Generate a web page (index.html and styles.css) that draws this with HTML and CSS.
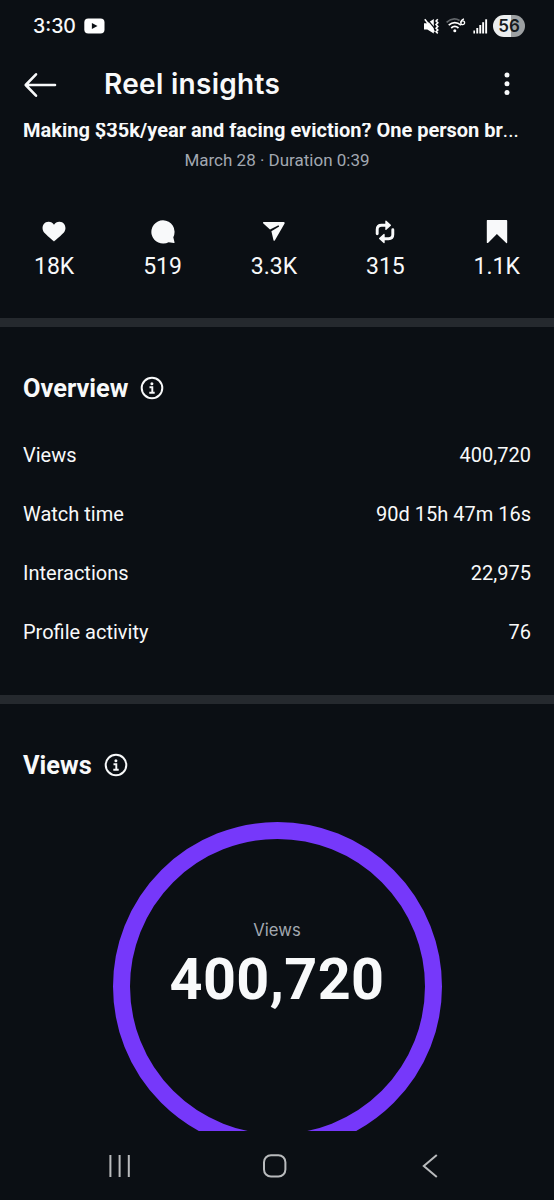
FILE: index.html
```
<!DOCTYPE html>
<html lang="en-us">
  <head>
    <meta charset="utf-8" />
    <meta name="viewport" content="width=device-width, initial-scale=1" />
    <title>Reel insights</title>
    <link rel="stylesheet" href="styles.css">
  </head>
  <body>
    <div class="statusbar">
      <span class="time">3:30</span>
      <svg class="youtube" width="21" height="16" viewBox="0 0 21 16">
        <rect x="0.3" y="0.5" width="20.2" height="15" rx="4" fill="#fff" />
        <path d="M7.9 5v6l5.6-3z" fill="#0b0f14" />
      </svg>
      <div class="status-icons">
        <svg width="17" height="17" viewBox="0 0 17 17">
          <path d="M1 5.3h3.3L10.8 1v14.6L4.3 11.5H1z" fill="#fff" />
          <path d="M3.2 0.2l10 12" stroke="#0b0f14" stroke-width="1.3" />
          <path d="M1.8 1.2l9.6 12.6" stroke="#fff" stroke-width="1.5" />
          <path d="M14.8 1.2l-1.7 1.8 1.7 1.8-1.7 1.8 1.7 1.8-1.7 1.8 1.7 1.8-1.7 1.8 1.7 1.5" fill="none" stroke="#fff" stroke-width="1.6" />
        </svg>
        <svg class="wifi" width="20" height="16" viewBox="0 0 20 16">
          <g fill="none" stroke-width="1.7">
            <path d="M0.6 4.3Q7 -1.3 13.6 2.5" stroke="#62666a" />
            <path d="M2.7 7.2Q8.8 2.2 15 7.2" stroke="#fff" />
            <path d="M5.2 10Q8.8 6.8 12.5 10" stroke="#fff" />
          </g>
          <circle cx="8.8" cy="12.8" r="1.5" fill="#fff" />
          <path d="M18 0.8Q14.9 1.7 14.8 4.7" fill="none" stroke="#fff" stroke-width="1.3" />
          <circle cx="16.7" cy="4.8" r="1.9" fill="none" stroke="#fff" stroke-width="1.3" />
        </svg>
        <svg class="signal" width="15" height="15" viewBox="0 0 15 15" fill="#fff">
          <rect x="0.4" y="11.5" width="1.6" height="3" />
          <rect x="3.3" y="9" width="1.9" height="5.5" />
          <rect x="6.3" y="6" width="1.9" height="8.5" />
          <rect x="9.2" y="3.2" width="1.9" height="11.3" />
          <rect x="12.2" y="0.3" width="1.9" height="14.2" />
        </svg>
        <span class="battery">56</span>
      </div>
    </div>

    <div class="header">
      <svg width="34" height="26" viewBox="0 0 34 26" fill="none" stroke="#f8f9fa" stroke-width="2.6" stroke-linecap="round" stroke-linejoin="round">
        <path d="M13 2.3L2.7 13 13 23.7M3 13h29" />
      </svg>
      <h1>Reel insights</h1>
      <svg class="more" width="6" height="24" viewBox="0 0 6 24" fill="#f8f9fa">
        <circle cx="3" cy="3" r="2.5" />
        <circle cx="3" cy="11.8" r="2.5" />
        <circle cx="3" cy="20.5" r="2.5" />
      </svg>
    </div>

    <div class="content">
      <div class="reel">
        <p class="caption">Making $35k/year and facing eviction? One person br<span>...</span></p>
        <p class="date">March 28 · Duration 0:39</p>
        <div class="stats">
          <div class="stat">
            <svg width="24" height="24" viewBox="0 0 24 24" fill="#f8f9fa">
              <path d="M12 21.5C10.7 20.6 4.4 15.2 2.1 12.6-1 8.8.6 2 6.4 1.8 8.8 1.7 10.8 2.9 12 4.7c1.2-1.8 3.2-3 5.6-2.9 5.8.2 7.4 7 4.3 10.8C19.6 15.2 13.3 20.6 12 21.5z" />
            </svg>
            <span>18K</span>
          </div>
          <div class="stat">
            <svg width="24" height="24" viewBox="0 0 24 24" fill="#f8f9fa">
              <path d="M12 0.2a11.7 11.7 0 1 0 5.6 22l5.3.9q.8 0 .6-.8l-1.2-5.1A11.7 11.7 0 0 0 12 .2z" />
            </svg>
            <span>519</span>
          </div>
          <div class="stat">
            <svg width="24" height="24" viewBox="0 0 24 24" fill="#f8f9fa">
              <path d="M1.6 2h20.1q1.5.1.9 1.4L12.8 20.4q-.8 1-1.3-.2L9.4 11.2 17.2 6.4 16.5 5.3 8 9.6 1.1 3.2Q.5 2.2 1.6 2z" />
            </svg>
            <span>3.3K</span>
          </div>
          <div class="stat">
            <svg width="24" height="24" viewBox="0 0 24 24">
              <g fill="none" stroke="#f8f9fa" stroke-width="2.9" stroke-linecap="round">
                <path d="M4.2 13.7V9.5Q4.2 5.2 8.5 5.2H13" />
                <path d="M19.8 9.8V14.5Q19.8 18.7 15.5 18.7H11" />
              </g>
              <path d="M12.3 1.1v8.3q.2 1 1.1.4l4.4-4q.6-.6 0-1.1L13.4.7q-.9-.6-1.1.4zM11.7 14.6v8q-.2 1-1.1.4l-4.4-4q-.6-.6 0-1.1l4.4-4q.9-.5 1.1.7z" fill="#f8f9fa" />
            </svg>
            <span>315</span>
          </div>
          <div class="stat">
            <svg width="24" height="24" viewBox="0 0 24 24" fill="#f8f9fa">
              <path d="M2.2 0h19.2q.8 0 .8.8v21.7q-.2 1-1 .4L11.9 14 3 22.9q-1 .5-1.2-.4V.8Q1.8 0 2.2 0z" />
            </svg>
            <span>1.1K</span>
          </div>
        </div>
      </div>

      <div class="section overview">
        <h2>
          Overview
          <svg class="info" width="24" height="24" viewBox="0 0 24 24">
            <circle cx="12" cy="12" r="10.3" fill="none" stroke="#f8f9fa" stroke-width="2" />
            <circle cx="11.9" cy="7.7" r="1.5" fill="#f8f9fa" />
            <path d="M9.5 11.2h2.8v5.3M9.3 16.7h5.4" fill="none" stroke="#f8f9fa" stroke-width="1.9" />
          </svg>
        </h2>
        <div class="row"><span>Views</span><span>400,720</span></div>
        <div class="row"><span>Watch time</span><span>90d 15h 47m 16s</span></div>
        <div class="row"><span>Interactions</span><span>22,975</span></div>
        <div class="row"><span>Profile activity</span><span>76</span></div>
      </div>

      <div class="section">
        <h2>
          Views
          <svg class="info" width="24" height="24" viewBox="0 0 24 24">
            <circle cx="12" cy="12" r="10.3" fill="none" stroke="#f8f9fa" stroke-width="2" />
            <circle cx="11.9" cy="7.7" r="1.5" fill="#f8f9fa" />
            <path d="M9.5 11.2h2.8v5.3M9.3 16.7h5.4" fill="none" stroke="#f8f9fa" stroke-width="1.9" />
          </svg>
        </h2>
        <div class="ring">
          <span class="ring-label">Views</span>
          <span class="ring-value">400,720</span>
        </div>
      </div>
    </div>

    <div class="navbar">
      <svg width="24" height="24" viewBox="0 0 24 24" stroke="#b9bbbd" stroke-width="2">
        <path d="M2.4 1v22M11.6 1v22M20.8 1v22" />
      </svg>
      <svg width="24" height="24" viewBox="0 0 24 24" fill="none" stroke="#b9bbbd" stroke-width="2">
        <rect x="1" y="1.2" width="21.4" height="21.4" rx="7" />
      </svg>
      <svg width="24" height="24" viewBox="0 0 24 24" fill="none" stroke="#b9bbbd" stroke-width="2">
        <path d="M18.8 1L5.8 12l13 11" />
      </svg>
    </div>
  </body>
</html>
```
FILE: styles.css
```
body {
  display: flex;
  flex-direction: column;
  height: 1200px;
  margin: 0;
  overflow: hidden;
  background: #0b0f14;
  color: #f8f9fa;
  font-family: Roboto, "Liberation Sans", sans-serif;
}
h1, h2, p {
  margin: 0;
}
svg {
  display: block;
  flex: none;
}

.statusbar {
  display: flex;
  flex: none;
  align-items: center;
  box-sizing: border-box;
  height: 52px;
  padding: 0 29px 0 33px;
}
.time {
  width: 51px;
  font: 500 19.5px Inter, sans-serif;
}
.status-icons {
  display: flex;
  align-items: center;
  margin-left: auto;
}
.wifi {
  margin-left: 6px;
}
.signal {
  margin: 0 5px 0 7px;
}
.battery {
  width: 32px;
  height: 22px;
  border-radius: 11px;
  background: linear-gradient(90deg, #eceeef 56%, #9da0a2 56%);
  color: #14181c;
  font: 600 17px/22px Inter, sans-serif;
  text-align: center;
}

.header {
  display: flex;
  flex: none;
  align-items: center;
  box-sizing: border-box;
  height: 71px;
  padding: 0 44px 6px 23px;
}
h1 {
  flex: 1;
  margin-left: 47px;
  padding-bottom: 2px;
  font: 600 28px Inter, sans-serif;
  letter-spacing: 0.3px;
}
.more {
  margin-bottom: 2px;
}

/* scrolled so the caption is cut off under the header */
.content {
  flex: 1;
  overflow: hidden;
}
.reel {
  display: flow-root;
  height: 195px;
}
.caption {
  margin-top: -4px;
  padding-left: 23px;
  font-size: 20px;
  font-weight: 700;
  line-height: 23px;
  white-space: nowrap;
}
.caption span {
  font-weight: 400;
}
.date {
  margin-top: 8px;
  color: #a2a8b1;
  font-size: 17px;
  line-height: 21px;
  text-align: center;
}
.stats {
  display: flex;
  justify-content: space-between;
  margin-top: 49px;
  padding: 0 34px;
}
.stat {
  display: flex;
  flex-direction: column;
  align-items: center;
  gap: 9px;
  font-size: 23px;
  line-height: 28px;
}

.section {
  padding: 44px 23px 0;
  border-top: 9px solid #25292e;
}
.overview {
  height: 324px;
}
h2 {
  display: flex;
  align-items: center;
  gap: 12px;
  height: 34px;
  font-size: 25.4px;
  font-weight: 700;
}
.info {
  margin-bottom: 1px;
}
.row {
  display: flex;
  justify-content: space-between;
  font-size: 20px;
  line-height: 24px;
  margin-bottom: 35px;
}
h2 + .row {
  margin-top: 38px;
}

.ring {
  display: flex;
  flex-direction: column;
  align-items: center;
  box-sizing: border-box;
  width: 329px;
  height: 329px;
  margin: 40px auto 0;
  padding-top: 80px;
  border: 17.5px solid #7638fa;
  border-radius: 50%;
}
.ring-label {
  color: #a2a8b1;
  font: 16.7px/22px Inter, sans-serif;
}
.ring-value {
  margin-top: 6px;
  font: 700 57.5px/66px Roboto, sans-serif;
  letter-spacing: 0.4px;
}

.navbar {
  display: flex;
  flex: none;
  align-items: center;
  justify-content: space-between;
  box-sizing: border-box;
  height: 69px;
  padding: 0 112px 0 108px;
}
```
